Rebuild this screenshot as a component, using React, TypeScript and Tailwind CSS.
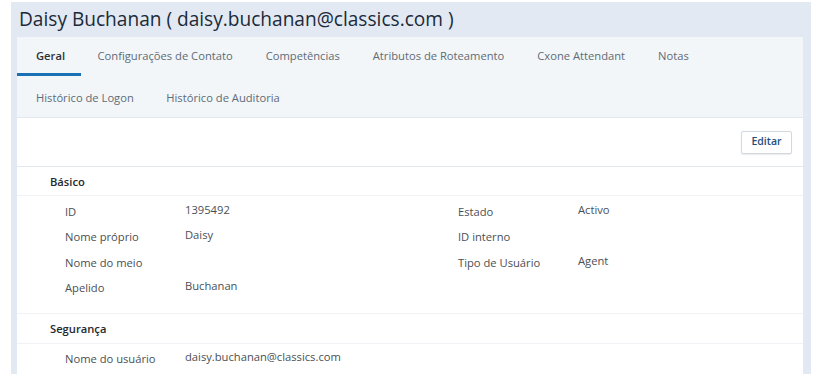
const TABS_ROW1 = [
  'Geral',
  'Configurações de Contato',
  'Competências',
  'Atributos de Roteamento',
  'Cxone Attendant',
  'Notas',
]
const TABS_ROW2 = ['Histórico de Logon', 'Histórico de Auditoria']

type Field = { label: string; value?: string }

const LEFT: Field[] = [
  { label: 'ID', value: '1395492' },
  { label: 'Nome próprio', value: 'Daisy' },
  { label: 'Nome do meio' },
  { label: 'Apelido', value: 'Buchanan' },
]

const RIGHT: Field[] = [
  { label: 'Estado', value: 'Activo' },
  { label: 'ID interno' },
  { label: 'Tipo de Usuário', value: 'Agent' },
]

function FieldRow({ f }: { f: Field }) {
  return (
    <div className="flex h-[25.3px]">
      <span className="w-[120px] pt-[2px] text-[#4a4f55]">{f.label}</span>
      <span className="text-[#4a4f55]">{f.value ?? ''}</span>
    </div>
  )
}

function Tab({ label, active, first }: { label: string; active?: boolean; first?: boolean }) {
  return (
    <div
      className={
        (first ? 'pl-[19px] pr-[16px] ' : 'px-[16.5px] ') +
        (active
          ? 'pt-[11px] h-[39px] border-b-[3px] border-[#1b70b5] text-[#2b3038] font-semibold'
          : 'pt-[11px] h-[39px] text-[#5f6b76]')
      }
    >
      {label}
    </div>
  )
}

export default function App() {
  return (
    <div className="w-[815px] h-[386px] bg-white pt-[2px] pl-[11px] text-[11.2px]" style={{ fontFamily: '"Open Sans", sans-serif' }}>
      <div className="w-[800px] h-[372px] bg-[#e2e9f2] pl-[6px] pr-[8px] overflow-hidden">
        <h1 className="h-[35px] pl-[2px] pt-[5px] text-[19.1px] leading-[25px] text-[#1c2a3a]">
          Daisy Buchanan ( daisy.buchanan@classics.com )
        </h1>

        <div className="bg-white h-[337px]">
          {/* Tabs */}
          <div className="bg-[#f2f6f9] h-[81px] border-b border-[#e3e8ee]">
            <div className="flex h-[39px]">
              {TABS_ROW1.map((t, i) => (
                <Tab key={t} label={t} active={i === 0} first={i === 0} />
              ))}
            </div>
            <div className="flex pt-[3px]">
              {TABS_ROW2.map((t, i) => (
                <Tab key={t} label={t} first={i === 0} />
              ))}
            </div>
          </div>

          {/* Toolbar */}
          <div className="flex justify-end items-center h-[49px] border-b border-[#e3e8ee] pr-[11px]">
            <button className="h-[23px] w-[51px] border border-[#d3d9e0] rounded-[2px] shadow-[0_1px_1px_rgba(0,0,0,0.08)] text-[10.5px] font-semibold text-[#1f4e79] bg-white">
              Editar
            </button>
          </div>

          {/* Básico */}
          <div className="h-[29px] pl-[33px] pt-[7px] font-semibold text-[#24292f] border-b border-[#f0f2f5]">
            Básico
          </div>
          <div className="flex pt-[6px] h-[118px] border-b border-[#f0f2f5]">
            <div className="w-[441px] pl-[48px]">
              {LEFT.map((f) => (
                <FieldRow key={f.label} f={f} />
              ))}
            </div>
            <div>
              {RIGHT.map((f) => (
                <FieldRow key={f.label} f={f} />
              ))}
            </div>
          </div>

          {/* Segurança */}
          <div className="h-[30px] pl-[33px] pt-[7px] font-semibold text-[#24292f] border-b border-[#f0f2f5]">
            Segurança
          </div>
          <div className="pt-[5px] pl-[48px]">
            <FieldRow f={{ label: 'Nome do usuário', value: 'daisy.buchanan@classics.com' }} />
          </div>
        </div>
      </div>
    </div>
  )
}
